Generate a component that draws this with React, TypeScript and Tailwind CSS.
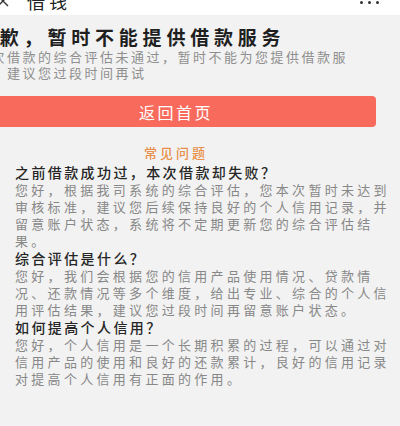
import React from "react";

const faqs = [
  {
    q: "之前借款成功过，本次借款却失败？",
    lines: [
      "您好，根据我司系统的综合评估，您本次暂时未达到",
      "审核标准，建议您后续保持良好的个人信用记录，并",
      "留意账户状态，系统将不定期更新您的综合评估结",
      "果。",
    ],
  },
  {
    q: "综合评估是什么？",
    lines: [
      "您好，我们会根据您的信用产品使用情况、贷款情",
      "况、还款情况等多个维度，给出专业、综合的个人信",
      "用评估结果，建议您过段时间再留意账户状态。",
    ],
  },
  {
    q: "如何提高个人信用？",
    lines: [
      "您好，个人信用是一个长期积累的过程，可以通过对",
      "信用产品的使用和良好的还款累计，良好的信用记录",
      "对提高个人信用有正面的作用。",
    ],
  },
];

export default function App() {
  return (
    <div className="min-h-[426px] w-[400px] overflow-hidden bg-[#f2f2f2] font-['Noto_Sans_CJK_SC',sans-serif]">
      <header className="flex h-[15px] justify-between overflow-hidden bg-white">
        <div className="-mt-[14px] flex h-[30px] items-center">
          <svg width="12" height="12" viewBox="0 0 12 12" className="-ml-[3px] text-[#333]">
            <path d="M1 1L11 11M11 1L1 11" stroke="currentColor" strokeWidth="1.4" fill="none" />
          </svg>
          <span className="ml-[18px] text-[18px] leading-[20px] tracking-[4px] text-[#222]">借钱</span>
        </div>
        <div className="mr-[21px] mt-[1px] flex gap-[5px]">
          <span className="h-[3px] w-[3px] rounded-full bg-[#333]" />
          <span className="h-[3px] w-[3px] rounded-full bg-[#333]" />
          <span className="h-[3px] w-[3px] rounded-full bg-[#333]" />
        </div>
      </header>

      <main className="-ml-6 w-[400px]">
        <h1 className="whitespace-nowrap pt-[11px] text-[19px] font-bold leading-[22px] tracking-[4.8px] text-[#1f1f1f]">
          抱歉，暂时不能提供借款服务
        </h1>
        <p className="mt-[1px] whitespace-nowrap text-[13px] leading-[16px] tracking-[2.5px] text-[#8f8f8f]">
          <span className="block">本次借款的综合评估未通过，暂时不能为您提供借款服</span>
          <span className="block">务，建议您过段时间再试</span>
        </p>

        <button className="mt-[15px] flex h-[31px] w-full items-center justify-center rounded-[4px] bg-[#f76a5c] text-[16px] tracking-[2.5px] text-white">
          返回首页
        </button>

        <div className="mt-[18px] text-center text-[13px] font-medium leading-[16px] tracking-[3px] text-[#e8904a]">
          常见问题
        </div>

        <div className="mt-[2px] pl-[39px]">
          {faqs.map((f) => (
            <section key={f.q}>
              <h2 className="whitespace-nowrap text-[14px] font-medium leading-[18px] tracking-[2.4px] text-[#262626]">
                {f.q}
              </h2>
              <p className="whitespace-nowrap text-[13px] leading-[17px] tracking-[3.3px] text-[#888]">
                {f.lines.map((l) => (
                  <span key={l} className="block">
                    {l}
                  </span>
                ))}
              </p>
            </section>
          ))}
        </div>
      </main>
    </div>
  );
}
